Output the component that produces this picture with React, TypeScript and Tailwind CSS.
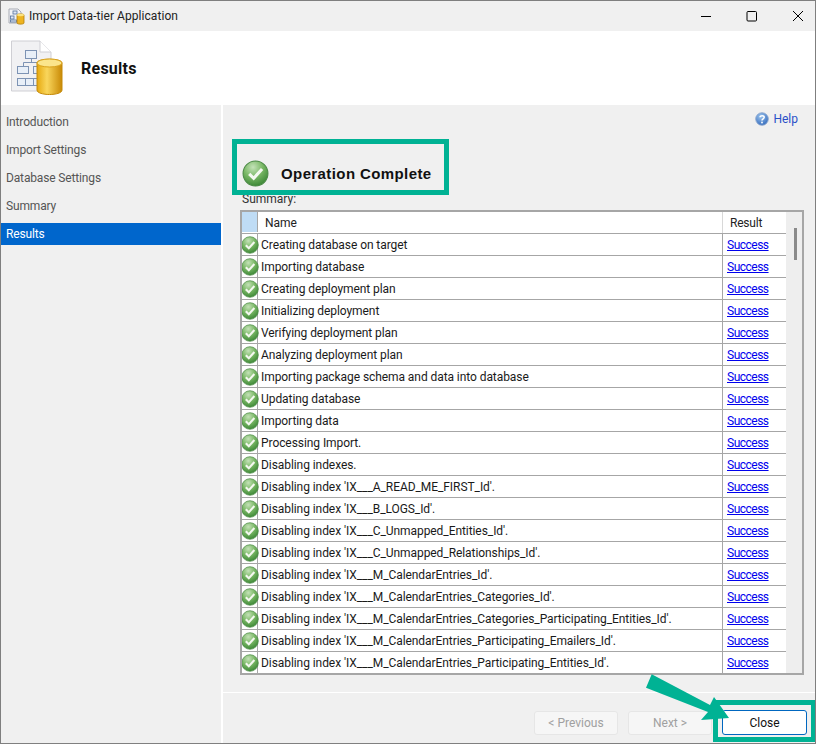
import React from "react";

function Check({ size = 18 }: { size?: number }) {
  return (
    <svg width={size} height={size} viewBox="0 0 18 18" className="shrink-0">
      <defs>
        <radialGradient id="chk" cx="0.4" cy="0.25" r="0.85">
          <stop offset="0" stopColor="#c4e2b8" />
          <stop offset="0.45" stopColor="#7ab866" />
          <stop offset="1" stopColor="#2f7d2c" />
        </radialGradient>
      </defs>
      <circle cx="9" cy="9" r="8.3" fill="url(#chk)" stroke="#4b8a45" strokeWidth="0.7" />
      <path d="M4.8 9.2 L7.8 12.2 L13.4 6" fill="none" stroke="#f4f8f0" strokeWidth="2.1" />
    </svg>
  );
}

function HeaderIcon() {
  return (
    <svg width="52" height="56" viewBox="0 0 52 56" className="shrink-0">
      <defs>
        <linearGradient id="cyl" x1="0" x2="1" y1="0" y2="0">
          <stop offset="0" stopColor="#e6a90f" />
          <stop offset="0.4" stopColor="#f9d65c" />
          <stop offset="1" stopColor="#c98a06" />
        </linearGradient>
      </defs>
      <path d="M0.5 1 H29 L40 12 V51 H0.5 Z" fill="#f1f1f3" stroke="#cfcfd4" />
      <path d="M29 1 V12 H40" fill="#ffffff" stroke="#cfcfd4" />
      <g fill="#e8eff8" stroke="#7d93b4" strokeWidth="1">
        <rect x="14.500" y="10.500" width="11" height="8" />
        <rect x="6.500" y="26.500" width="11" height="7" />
        <rect x="22.500" y="26.500" width="11" height="7" />
        <rect x="6.500" y="38.500" width="8" height="7" />
        <rect x="14.500" y="38.500" width="8" height="7" />
        <rect x="22.500" y="38.500" width="8" height="7" />
      </g>
      <path d="M20.500 18.500 V22.500 M12.500 26.500 V22.500 H28.500 V26.500" fill="none" stroke="#7d93b4" />
      <path d="M26 23 C26 18 51 18 51 23 V50 C51 56 26 56 26 50 Z" fill="url(#cyl)" stroke="#c58a0a" />
      <ellipse cx="38.500" cy="23" rx="12.500" ry="4" fill="#fbe58b" stroke="#d9a21b" />
    </svg>
  );
}

function TitleIcon() {
  return (
    <svg width="17" height="17" viewBox="0 0 17 17" className="shrink-0">
      <path d="M1 1 H10 L13 4 V15 H1 Z" fill="#f2f3f6" stroke="#a8acb5" />
      <rect x="5" y="3" width="4" height="3" fill="#dfe8f5" stroke="#56729c" strokeWidth="0.8" />
      <rect x="2.500" y="8" width="3.500" height="3" fill="#dfe8f5" stroke="#56729c" strokeWidth="0.8" />
      <rect x="2.500" y="12" width="6" height="2" fill="#dfe8f5" stroke="#56729c" strokeWidth="0.8" />
      <path d="M9 7 C9 5.500 16 5.500 16 7 V15 C16 16.500 9 16.500 9 15 Z" fill="#eeb420" stroke="#b47f08" strokeWidth="0.8" />
      <ellipse cx="12.500" cy="7" rx="3.500" ry="1.200" fill="#fbe27f" />
    </svg>
  );
}

function HelpIcon() {
  return (
    <svg width="14" height="14" viewBox="0 0 14 14" className="shrink-0">
      <defs>
        <radialGradient id="hlp" cx="0.4" cy="0.3" r="0.8">
          <stop offset="0" stopColor="#9cc5ee" />
          <stop offset="1" stopColor="#2a62b8" />
        </radialGradient>
      </defs>
      <circle cx="7" cy="7" r="6.300" fill="url(#hlp)" stroke="#8fa9cf" strokeWidth="0.9" />
      <path d="M5 5.300 C5 3.300 9.200 3.300 9.200 5.300 C9.200 6.800 7 6.800 7 8.500" fill="none" stroke="#fff" strokeWidth="1.500" />
      <circle cx="7" cy="10.500" r="0.900" fill="#fff" />
    </svg>
  );
}

const rows = [
  "Creating database on target",
  "Importing database",
  "Creating deployment plan",
  "Initializing deployment",
  "Verifying deployment plan",
  "Analyzing deployment plan",
  "Importing package schema and data into database",
  "Updating database",
  "Importing data",
  "Processing Import.",
  "Disabling indexes.",
  "Disabling index 'IX___A_READ_ME_FIRST_Id'.",
  "Disabling index 'IX___B_LOGS_Id'.",
  "Disabling index 'IX___C_Unmapped_Entities_Id'.",
  "Disabling index 'IX___C_Unmapped_Relationships_Id'.",
  "Disabling index 'IX___M_CalendarEntries_Id'.",
  "Disabling index 'IX___M_CalendarEntries_Categories_Id'.",
  "Disabling index 'IX___M_CalendarEntries_Categories_Participating_Entities_Id'.",
  "Disabling index 'IX___M_CalendarEntries_Participating_Emailers_Id'.",
  "Disabling index 'IX___M_CalendarEntries_Participating_Entities_Id'.",
];

const nav = ["Introduction", "Import Settings", "Database Settings", "Summary"];

export default function App() {
  return (
    <div className="w-[816px] h-[744px] overflow-hidden relative flex flex-col border border-[#7f7f7f] bg-[#f0f0f0] text-[12px] font-['Roboto','Noto_Sans',sans-serif] text-[#1a1a1a]">
      {/* Title bar */}
      <div className="h-[30px] shrink-0 flex items-center pl-[7px] bg-[#f0f0f0]">
        <TitleIcon />
        <span className="ml-[4px] text-[#222] tracking-[0.06px]">Import Data-tier Application</span>
        <div className="ml-auto flex items-center text-black">
          <svg width="46" height="30" viewBox="0 0 46 30"><path d="M18 15.500 H28" stroke="#000" strokeWidth="1" /></svg>
          <svg width="46" height="30" viewBox="0 0 46 30"><rect x="18" y="10.500" width="9.500" height="9.500" rx="1" fill="none" stroke="#000" strokeWidth="1" /></svg>
          <svg width="40" height="30" viewBox="0 0 40 30"><path d="M18 10 L28 20 M28 10 L18 20" stroke="#000" strokeWidth="1" /></svg>
        </div>
      </div>
      {/* Header */}
      <div className="h-[74px] shrink-0 bg-white flex items-center pl-[10px]">
        <HeaderIcon />
        <span className="ml-[18px] pt-[2px] text-[16px] font-bold text-[#111] tracking-[0.25px]">Results</span>
      </div>
      {/* Body */}
      <div className="flex flex-1 min-h-0">
        {/* Sidebar */}
        <div className="w-[220px] shrink-0 flex flex-col pt-[6px] tracking-[-0.15px]">
          {nav.map((n) => (
            <div key={n} className="h-[22px] mb-[6px] pl-[5px] flex items-center text-[#555]">{n}</div>
          ))}
          <div className="h-[22px] pl-[5px] flex items-center bg-[#0066cc] text-white">Results</div>
        </div>
        <div className="w-[2px] shrink-0 bg-white" />
        {/* Content */}
        <div className="flex-1 min-w-0 flex flex-col">
          <div className="flex justify-end items-center gap-[4px] pr-[17px] h-[26px] pt-[1px] text-[#2a50c8]">
            <HelpIcon />
            <span>Help</span>
          </div>
          <div className="flex items-center pl-[19px] mt-[27px] h-[30px]">
            <Check size={27} />
            <span className="ml-[12px] text-[15px] font-bold font-['Liberation_Sans',sans-serif] tracking-[0.4px] text-[#111] relative top-[1px]">Operation Complete</span>
          </div>
          <div className="pl-[19px] mt-[4px] h-[15px] leading-[15px] text-[#333]">Summary:</div>
          {/* Table */}
          <div className="ml-[17px] w-[564px] h-[465px] mt-[3px] border-2 border-[#a6a6a6] bg-[#f0f0f0] flex overflow-hidden">
            <div className="w-[544px] shrink-0 flex flex-col">
              <div className="h-[22px] shrink-0 flex bg-white border-b border-[#a6a6a6]">
                <div className="w-[16px] shrink-0 bg-[#bfdcf5] border-r border-[#a6a6a6] mb-[1px]" />
                <div className="flex-1 pl-[7px] flex items-center text-[#222] border-r border-[#d8d8d8]">Name</div>
                <div className="w-[63px] shrink-0 pl-[7px] flex items-center text-[#222] tracking-[-0.2px]">Result</div>
              </div>
              {rows.map((r) => (
                <div key={r} className="h-[22px] shrink-0 flex bg-white border-b border-[#a6a6a6]">
                  <div className="w-[16px] shrink-0 flex items-center justify-center border-r border-[#a6a6a6]">
                    <Check />
                  </div>
                  <div className="flex-1 pl-[3px] flex items-center whitespace-nowrap overflow-hidden text-[#1a1a1a] border-r border-[#a6a6a6] tracking-[-0.07px]">{r}</div>
                  <div className="w-[63px] shrink-0 pl-[4px] flex items-center text-[#0000ee] underline tracking-[-0.5px]">Success</div>
                </div>
              ))}
            </div>
            <div className="flex-1 flex justify-center pl-[2px] pt-[16px] bg-[#eeeeee]">
              <div className="w-[3px] h-[32px] bg-[#8a8a8a]" />
            </div>
          </div>
          {/* Footer */}
          <div className="mt-[17px] border-t border-white pt-[17px] flex items-start pl-[311px] gap-[10px]">
            <button className="mt-[1px] w-[84px] h-[24px] rounded-[3px] border border-[#e6e6e6] bg-[#f6f6f6] text-[#a0a0a0]">&lt; Previous</button>
            <button className="mt-[1px] w-[84px] h-[24px] rounded-[3px] border border-[#e6e6e6] bg-[#f6f6f6] text-[#a0a0a0]">Next &gt;</button>
            <button className="w-[85px] h-[25px] rounded-[3px] border border-[#0067c0] bg-white text-[#111]">Close</button>
          </div>
        </div>
      </div>
      {/* Annotation overlays */}
      <div className="absolute left-[231px] top-[138px] w-[217px] h-[56px] border-[5px] border-[#00b294]" />
      <div className="absolute left-[712px] top-[699px] w-[103px] h-[42px] border-[5px] border-[#00b294]" />
      <svg className="absolute left-[639px] top-[664px]" width="100" height="60" viewBox="0 0 100 60">
        <polygon points="11.700,9.300 70,40 74,32 89,53 61,55 68,47 6,22.700" fill="#00b294" />
      </svg>
    </div>
  );
}
